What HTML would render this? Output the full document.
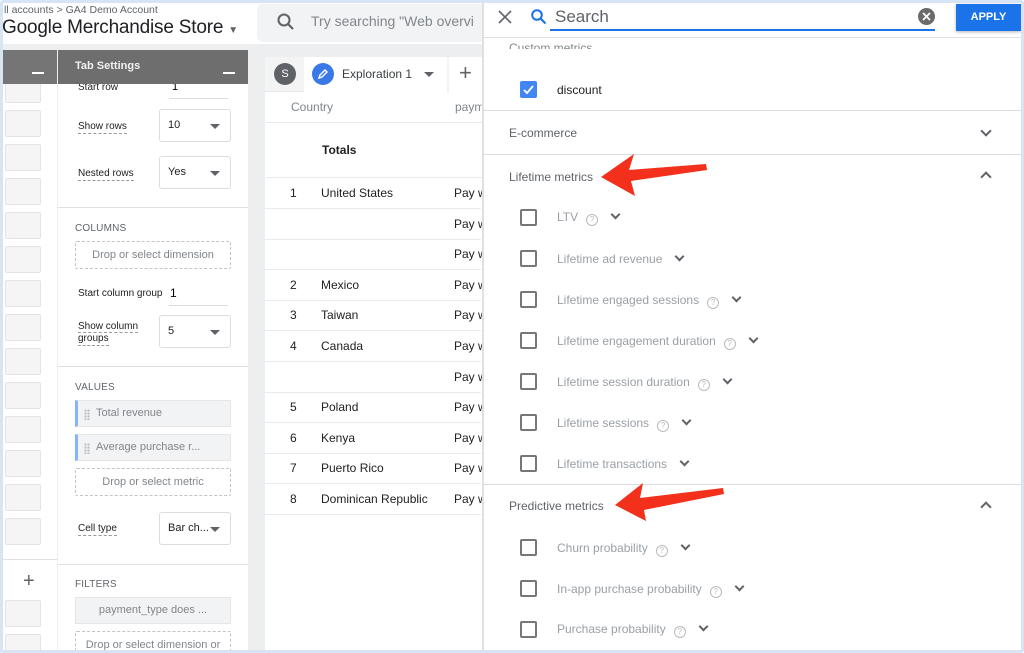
<!DOCTYPE html>
<html><head><meta charset="utf-8"><style>
*{box-sizing:border-box;margin:0;padding:0}
body{width:1024px;height:653px;overflow:hidden;background:#fff;font-family:"Liberation Sans",Arial,sans-serif;position:relative}
.a{position:absolute}
.t{position:absolute;white-space:nowrap}
.lb{font-size:10px;color:#202124;border-bottom:1px dashed #999;line-height:12px}
.sel{position:absolute;left:159px;width:72px;height:33px;border:1px solid #dadce0;border-radius:3px;background:#fff;font-size:11px;color:#202124;padding:9px 0 0 8px;white-space:nowrap}
.sel:after{content:"";position:absolute;right:10px;top:14px;border:5px solid transparent;border-top:5px solid #5f6368}
.hd{font-size:10px;color:#5f6368;letter-spacing:.2px}
.dz{position:absolute;left:17px;width:156px;height:28px;border:1px dashed #c4c4c4;border-radius:2px;font-size:11px;color:#80868b;text-align:center;line-height:26px;white-space:nowrap;overflow:hidden}
.ch{position:absolute;left:17px;width:156px;height:27px;background:#f1f3f4;border:1px solid #e6e6e6;border-left:3px solid #8ab4f8;font-size:11px;color:#80868b;line-height:25px;padding-left:18px}
.dots{position:absolute;left:6px;top:8px;width:6px;height:11px;background-image:radial-gradient(circle,#bbb 1px,transparent 1.2px);background-size:3px 3px}
.lbx{position:absolute;left:2px;width:36px;height:27px;background:#f5f5f5;border:1px solid #e4e4e4;border-radius:2px}
.row{position:absolute;left:0;width:216px;height:31px;border-bottom:1px solid #e8eaed;font-size:12px;color:#202124;white-space:nowrap}
.row span{position:absolute;top:8px}
.cb{position:absolute;left:520px;width:17px;height:17px;border:2px solid #777;border-radius:2px}
.it{position:absolute;left:557px;font-size:12px;color:#9aa0a6;white-space:nowrap}
.q{display:inline-block;width:12px;height:12px;border:1px solid #bbb;border-radius:50%;font-size:8px;line-height:10px;text-align:center;color:#bbb;margin-left:8px;vertical-align:-1px}
.v{display:inline-block;width:7px;height:7px;border-right:2px solid #5f6368;border-bottom:2px solid #5f6368;transform:rotate(45deg);margin-left:14px;vertical-align:3px}
.sec{position:absolute;left:509px;font-size:12px;color:#5f6368}
.line{position:absolute;left:483px;width:538px;height:1px;background:#dadce0}
.up{position:absolute;left:982px;width:8px;height:8px;border-left:2px solid #5f6368;border-top:2px solid #5f6368;transform:rotate(45deg)}
.dn{position:absolute;left:982px;width:8px;height:8px;border-right:2px solid #5f6368;border-bottom:2px solid #5f6368;transform:rotate(45deg)}
</style></head><body>
<!-- header -->
<div class="t" style="left:4px;top:4px;font-size:10.5px;color:#5f6368">ll accounts &gt; GA4 Demo Account</div>
<div class="t" style="left:2px;top:17px;font-size:19px;color:#202124;letter-spacing:-0.2px">Google Merchandise Store <span style="font-size:10px;color:#5f6368">▼</span></div>
<div class="a" style="left:257px;top:4px;width:240px;height:38px;background:#f1f3f4;border-radius:6px"></div>
<svg class="a" style="left:276px;top:12px" width="20" height="20" viewBox="0 0 20 20"><circle cx="8" cy="8" r="5.5" fill="none" stroke="#5f6368" stroke-width="2"/><path d="M12 12l5 5" stroke="#5f6368" stroke-width="2.2"/></svg>
<div class="t" style="left:311px;top:13px;font-size:14px;color:#80868b">Try searching "Web overvi</div>
<!-- grey body -->
<div class="a" style="left:0;top:44px;width:483px;height:609px;background:#eceef0"></div>
<!-- left column -->
<div class="a" style="left:3px;top:50px;width:54px;height:600px;background:#fff;overflow:hidden">
<div class="lbx" style="top:26px"></div><div class="lbx" style="top:60px"></div><div class="lbx" style="top:94px"></div><div class="lbx" style="top:128px"></div><div class="lbx" style="top:162px"></div><div class="lbx" style="top:196px"></div><div class="lbx" style="top:230px"></div><div class="lbx" style="top:264px"></div><div class="lbx" style="top:298px"></div><div class="lbx" style="top:332px"></div><div class="lbx" style="top:366px"></div><div class="lbx" style="top:400px"></div><div class="lbx" style="top:434px"></div><div class="lbx" style="top:468px"></div>
<div class="a" style="left:0;top:509px;width:54px;height:1px;background:#e0e0e0"></div>
<div class="t" style="left:20px;top:520px;font-size:20px;color:#5f6368">+</div>
<div class="lbx" style="top:550px"></div><div class="lbx" style="top:584px"></div>
<div class="a" style="left:0;top:0;width:54px;height:34px;background:#757575"></div>
<div class="a" style="left:29px;top:22px;width:12px;height:2px;background:#fff"></div>
</div>
<!-- tab settings -->
<div class="a" style="left:58px;top:50px;width:190px;height:600px;background:#fff;overflow:hidden">
<div class="t" style="left:20px;top:32px;font-size:10px;color:#202124">Start row</div>
<div class="t" style="left:114px;top:31px;font-size:11px">1</div>
<div class="a" style="left:111px;top:48px;width:59px;height:1px;background:#dadce0"></div>
<div class="t lb" style="left:20px;top:71px">Show rows</div>
<div class="sel" style="top:59px;left:101px">10</div>
<div class="t lb" style="left:20px;top:118px">Nested rows</div>
<div class="sel" style="top:106px;left:101px">Yes</div>
<div class="a" style="left:0;top:157px;width:190px;height:1px;background:#e0e0e0"></div>
<div class="t hd" style="left:17px;top:173px">COLUMNS</div>
<div class="dz" style="top:191px">Drop or select dimension</div>
<div class="t" style="left:20px;top:238px;font-size:10px;color:#202124">Start column group</div>
<div class="t" style="left:112px;top:236px;font-size:12px">1</div>
<div class="a" style="left:111px;top:255px;width:59px;height:1px;background:#dadce0"></div>
<div class="t lb" style="left:20px;top:271px;border:none">Show column</div>
<div class="a" style="left:20px;top:282px;width:60px;border-bottom:1px dashed #999"></div>
<div class="t lb" style="left:20px;top:283px">groups</div>
<div class="sel" style="top:265px;left:101px">5</div>
<div class="a" style="left:0;top:316px;width:190px;height:1px;background:#e0e0e0"></div>
<div class="t hd" style="left:17px;top:332px">VALUES</div>
<div class="ch" style="top:350px"><span class="dots"></span>Total revenue</div>
<div class="ch" style="top:384px"><span class="dots"></span>Average purchase r...</div>
<div class="dz" style="top:418px">Drop or select metric</div>
<div class="t lb" style="left:20px;top:473px">Cell type</div>
<div class="sel" style="top:462px;left:101px">Bar ch...</div>
<div class="a" style="left:0;top:514px;width:190px;height:1px;background:#e0e0e0"></div>
<div class="t hd" style="left:17px;top:529px">FILTERS</div>
<div class="a" style="left:17px;top:547px;width:156px;height:27px;background:#f1f3f4;border:1px solid #e6e6e6;font-size:11px;color:#80868b;text-align:center;line-height:25px">payment_type does ...</div>
<div class="dz" style="top:581px;height:30px">Drop or select dimension or</div>
<div class="a" style="left:0;top:0;width:190px;height:34px;background:#6e6e6e"></div>
<div class="t" style="left:17px;top:10px;font-size:11px;font-weight:bold;color:#f1f1f1">Tab Settings</div>
<div class="a" style="left:165px;top:22px;width:12px;height:2px;background:#fff"></div>
</div>
<!-- canvas -->
<div class="a" style="left:265px;top:57px;width:218px;height:593px;background:#fff;overflow:hidden">
<div class="a" style="left:0;top:0;width:218px;height:35px;background:#f4f4f4;border-bottom:1px solid #e8eaed"></div>
<div class="a" style="left:39px;top:0;width:143px;height:36px;background:#fff"></div>
<div class="a" style="left:184px;top:0;width:33px;height:35px;background:#fff"></div>
<div class="a" style="left:9px;top:6px;width:22px;height:22px;border-radius:50%;background:#5f6368;color:#fff;font-size:11px;text-align:center;line-height:22px">S</div>
<div class="a" style="left:47px;top:6px;width:22px;height:22px;border-radius:50%;background:#3b78e7"></div>
<svg class="a" style="left:51px;top:10px" width="14" height="14" viewBox="0 0 14 14"><path d="M3 11l1-3 5-5 2 2-5 5z" fill="none" stroke="#fff" stroke-width="1.4"/></svg>
<div class="t" style="left:77px;top:10px;font-size:12px;color:#3c4043">Exploration 1</div>
<div class="a" style="left:159px;top:15px;border:5px solid transparent;border-top:5px solid #5f6368"></div>
<div class="t" style="left:194px;top:3px;font-size:22px;color:#5f6368;font-weight:300">+</div>
<div class="t" style="left:26px;top:43px;font-size:12px;color:#80868b">Country</div>
<div class="t" style="left:190px;top:43px;font-size:12px;color:#80868b">paym</div>
<div class="a" style="left:1px;top:65px;width:216px;height:1px;background:#e8eaed"></div>
<div class="t" style="left:57px;top:86px;font-size:12px;font-weight:bold;color:#202124">Totals</div>
<div class="a" style="left:1px;top:120px;width:216px;height:1px;background:#e8eaed"></div>
<div class="row" style="top:121px"><span style="left:25px">1</span><span style="left:56px">United States</span><span style="left:189px">Pay w</span></div>
<div class="row" style="top:152px"><span style="left:189px">Pay w</span></div>
<div class="row" style="top:182px"><span style="left:189px">Pay w</span></div>
<div class="row" style="top:213px"><span style="left:25px">2</span><span style="left:56px">Mexico</span><span style="left:189px">Pay w</span></div>
<div class="row" style="top:243px"><span style="left:25px">3</span><span style="left:56px">Taiwan</span><span style="left:189px">Pay w</span></div>
<div class="row" style="top:274px"><span style="left:25px">4</span><span style="left:56px">Canada</span><span style="left:189px">Pay w</span></div>
<div class="row" style="top:305px"><span style="left:189px">Pay w</span></div>
<div class="row" style="top:335px"><span style="left:25px">5</span><span style="left:56px">Poland</span><span style="left:189px">Pay w</span></div>
<div class="row" style="top:366px"><span style="left:25px">6</span><span style="left:56px">Kenya</span><span style="left:189px">Pay w</span></div>
<div class="row" style="top:396px"><span style="left:25px">7</span><span style="left:56px">Puerto Rico</span><span style="left:189px">Pay w</span></div>
<div class="row" style="top:427px"><span style="left:25px">8</span><span style="left:56px">Dominican Republic</span><span style="left:189px">Pay w</span></div>
</div>
<!-- right panel -->
<div class="a" style="left:482px;top:0;width:2px;height:653px;background:#e0e0e0"></div>
<div class="a" style="left:484px;top:0;width:538px;height:653px;background:#fff"></div>
<div class="a" style="left:484px;top:37px;width:538px;height:1px;background:#e0e0e0"></div>
<svg class="a" style="left:497px;top:9px" width="16" height="16" viewBox="0 0 16 16"><path d="M2 2l12 12M14 2L2 14" stroke="#5f6368" stroke-width="1.6"/></svg>
<svg class="a" style="left:530px;top:8px" width="18" height="18" viewBox="0 0 18 18"><circle cx="7" cy="7" r="4.8" fill="none" stroke="#1a73e8" stroke-width="2"/><path d="M10.5 10.5l5 5" stroke="#1a73e8" stroke-width="2.2"/></svg>
<div class="t" style="left:555px;top:7px;font-size:17px;color:#5f6368">Search</div>
<div class="a" style="left:550px;top:29px;width:385px;height:2px;background:#1a73e8"></div>
<div class="a" style="left:918px;top:8px;width:17px;height:17px;border-radius:50%;background:#6b6b6b"></div>
<svg class="a" style="left:922px;top:12px" width="9" height="9" viewBox="0 0 9 9"><path d="M1 1l7 7M8 1L1 8" stroke="#fff" stroke-width="1.8"/></svg>
<div class="a" style="left:956px;top:4px;width:65px;height:27px;background:#1a73e8;color:#fff;font-size:11px;font-weight:bold;text-align:center;line-height:27px;box-shadow:0 1px 3px rgba(0,0,0,.3)">APPLY</div>
<div class="t" style="left:509px;top:41px;font-size:12px;color:#80868b;height:8px;overflow:hidden">Custom metrics</div>
<div class="a" style="left:520px;top:81px;width:17px;height:17px;background:#4285f4;border-radius:2px"></div>
<svg class="a" style="left:522px;top:83px" width="13" height="13" viewBox="0 0 13 13"><path d="M2 7l3 3 6-7" fill="none" stroke="#fff" stroke-width="1.8"/></svg>
<div class="t" style="left:557px;top:83px;font-size:12px;color:#202124">discount</div>
<div class="line" style="top:110px"></div>
<div class="sec" style="top:126px">E-commerce</div><div class="dn" style="top:127px"></div>
<div class="line" style="top:154px"></div>
<div class="sec" style="top:170px">Lifetime metrics</div><div class="up" style="top:173px"></div>
<div class="cb" style="top:209px"></div><div class="it" style="top:210px">LTV<span class="q">?</span><span class="v"></span></div>
<div class="cb" style="top:250px"></div><div class="it" style="top:252px">Lifetime ad revenue<span class="v"></span></div>
<div class="cb" style="top:291px"></div><div class="it" style="top:293px">Lifetime engaged sessions<span class="q">?</span><span class="v"></span></div>
<div class="cb" style="top:332px"></div><div class="it" style="top:334px">Lifetime engagement duration<span class="q">?</span><span class="v"></span></div>
<div class="cb" style="top:373px"></div><div class="it" style="top:375px">Lifetime session duration<span class="q">?</span><span class="v"></span></div>
<div class="cb" style="top:414px"></div><div class="it" style="top:416px">Lifetime sessions<span class="q">?</span><span class="v"></span></div>
<div class="cb" style="top:455px"></div><div class="it" style="top:457px">Lifetime transactions<span class="v"></span></div>
<div class="line" style="top:484px"></div>
<div class="sec" style="top:499px">Predictive metrics</div><div class="up" style="top:503px"></div>
<div class="cb" style="top:539px"></div><div class="it" style="top:541px">Churn probability<span class="q">?</span><span class="v"></span></div>
<div class="cb" style="top:580px"></div><div class="it" style="top:582px">In-app purchase probability<span class="q">?</span><span class="v"></span></div>
<div class="cb" style="top:621px"></div><div class="it" style="top:622px">Purchase probability<span class="q">?</span><span class="v"></span></div>
<!-- arrows -->
<svg class="a" style="left:0;top:0" width="1024" height="653"><path d="M601 177L634 154L629 170L706 164L707 170L631 181L635 196Z" fill="#f2301b"/><path d="M615 505L643 483L640 498L723 488L724 494L644 510L646 521Z" fill="#f2301b"/></svg>
<!-- frame -->
<div class="a" style="left:0;top:0;width:1024px;height:653px;border:3px solid #d6e4f5;border-radius:3px"></div>
</body></html>
